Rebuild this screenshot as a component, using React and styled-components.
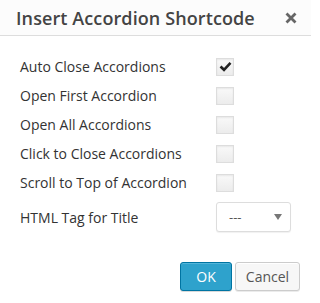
import React from 'react';
import styled, { createGlobalStyle } from 'styled-components';

const GlobalStyle = createGlobalStyle`
	html, body {
		margin: 0;
		padding: 0;
		background: #fff;
	}
	body {
		font-family: "Open Sans", "Liberation Sans", sans-serif;
		color: #333;
	}
`;

const Dialog = styled.div`
	width: 311px;
	height: 303px;
	background: #fff;
	display: flex;
	flex-direction: column;
`;

const Header = styled.div`
	height: 35px;
	background: #fcfcfc;
	border-bottom: 1px solid #ddd;
	display: flex;
	align-items: center;
	justify-content: space-between;
	padding: 0 14px 0 16px;
`;

const Title = styled.h1`
	margin: 0;
	font-size: 18px;
	font-weight: 600;
	color: #444;
	letter-spacing: 0.1px;
`;

const Close = styled.button`
	border: 0;
	background: none;
	padding: 0;
	width: 12px;
	height: 12px;
	display: flex;
	cursor: pointer;
`;

const Body = styled.div`
	padding: 16px 20px 0 20px;
`;

const Row = styled.label`
	display: grid;
	grid-template-columns: 196px auto;
	align-items: center;
	height: 29px;
	font-size: 14px;
	color: #333;
`;

const SelectRow = styled(Row)`
	height: 30px;
	margin-top: 5px;
`;

const Box = styled.span`
	width: 16px;
	height: 16px;
	border: 1px solid #ddd;
	background: linear-gradient(#f9f9f9, #ececec);
	box-shadow: inset 0 1px 2px rgba(0, 0, 0, 0.07);
	display: flex;
	align-items: center;
	justify-content: center;
`;

const Select = styled.div`
	box-sizing: border-box;
	width: 75px;
	height: 30px;
	border: 1px solid #ddd;
	border-radius: 3px;
	background: #fff;
	box-shadow: 0 1px 1px rgba(0, 0, 0, 0.06);
	display: flex;
	align-items: center;
	justify-content: space-between;
	padding: 0 8px 0 12px;
	font-size: 13px;
	color: #555;
`;

const Footer = styled.div`
	display: flex;
	justify-content: flex-end;
	gap: 3px;
	padding: 30px 11px 0 0;
`;

const Button = styled.button`
	box-sizing: border-box;
	height: 29px;
	width: ${p => p.$w}px;
	padding: 0;
	border-radius: 3px;
	font-family: "Open Sans", "Liberation Sans", sans-serif;
	font-size: 14px;
	cursor: pointer;
	border: 1px solid #ccc;
	background: #f7f7f7;
	color: #555;
	box-shadow: inset 0 1px 0 #fff, 0 1px 0 rgba(0, 0, 0, 0.08);
`;

const Primary = styled(Button)`
	border-color: #0074a2;
	background: #2ea2cc;
	color: #fff;
	box-shadow: inset 0 1px 0 rgba(120, 200, 230, 0.5), 0 1px 0 rgba(0, 0, 0, 0.15);
`;

const options = [
	{ label: 'Auto Close Accordions', checked: true },
	{ label: 'Open First Accordion' },
	{ label: 'Open All Accordions' },
	{ label: 'Click to Close Accordions' },
	{ label: 'Scroll to Top of Accordion' },
];

function Check() {
	return (
		<svg width="13" height="11" viewBox="0 0 13 11">
			<path d="M1.5 5.5 L5 8.8 L11.5 1.8" fill="none" stroke="#222" strokeWidth="2.6" />
		</svg>
	);
}

export default function App() {
	return (
		<>
			<GlobalStyle />
			<Dialog>
				<Header>
					<Title>Insert Accordion Shortcode</Title>
					<Close aria-label="Close">
						<svg width="12" height="12" viewBox="0 0 12 12">
							<path d="M1.5 1.5 L10.5 10.5 M10.5 1.5 L1.5 10.5" stroke="#666" strokeWidth="2.8" />
						</svg>
					</Close>
				</Header>
				<Body>
					{options.map(o => (
						<Row key={o.label}>
							<span>{o.label}</span>
							<Box>{o.checked && <Check />}</Box>
						</Row>
					))}
					<SelectRow>
						<span>HTML Tag for Title</span>
						<Select>
							<span>---</span>
							<svg width="8" height="6" viewBox="0 0 8 6">
								<path d="M0 0 L8 0 L4 6 Z" fill="#777" />
							</svg>
						</Select>
					</SelectRow>
				</Body>
				<Footer>
					<Primary $w={52}>OK</Primary>
					<Button $w={65}>Cancel</Button>
				</Footer>
			</Dialog>
		</>
	);
}
